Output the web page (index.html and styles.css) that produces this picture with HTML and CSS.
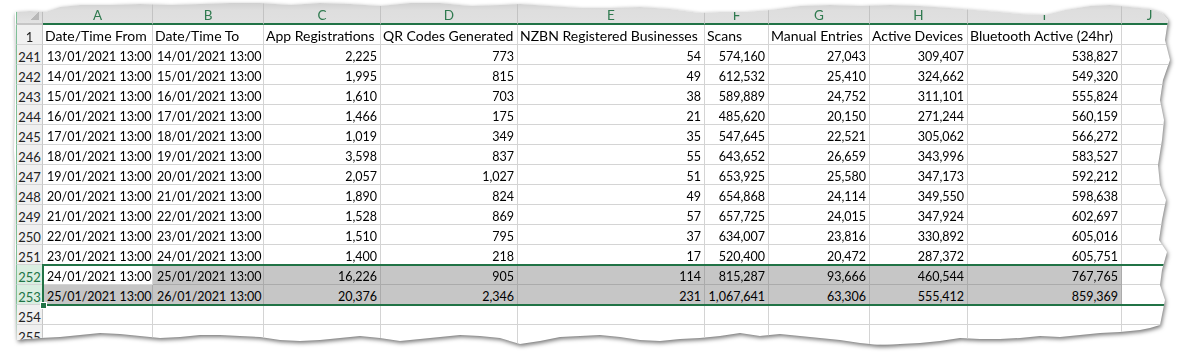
FILE: index.html
```html
<!DOCTYPE html>
<html>
<head>
<meta charset="utf-8">
<link rel="stylesheet" href="styles.css">
</head>
<body>
<div class="stage">
  <div class="sheet">
    <div class="grid">
      <div class="row head">
        <div class="corner"></div>
        <div class="ch">A</div><div class="ch">B</div><div class="ch">C</div><div class="ch">D</div><div class="ch">E</div><div class="ch">F</div><div class="ch">G</div><div class="ch">H</div><div class="ch">I</div><div class="ch">J</div>
      </div>
      <div class="row">
        <div class="rh">1</div>
        <div class="c t">Date/Time From</div><div class="c t">Date/Time To</div><div class="c t">App Registrations</div><div class="c t">QR Codes Generated</div><div class="c t">NZBN Registered Businesses</div><div class="c t">Scans</div><div class="c t">Manual Entries</div><div class="c t">Active Devices</div><div class="c t">Bluetooth Active (24hr)</div><div class="c"></div>
      </div>
      <div class="row">
        <div class="rh">241</div>
        <div class="c d">13/01/2021 13:00</div><div class="c d">14/01/2021 13:00</div><div class="c n">2,225</div><div class="c n">773</div><div class="c n">54</div><div class="c n">574,160</div><div class="c n">27,043</div><div class="c n">309,407</div><div class="c n">538,827</div><div class="c"></div>
      </div>
      <div class="row">
        <div class="rh">242</div>
        <div class="c d">14/01/2021 13:00</div><div class="c d">15/01/2021 13:00</div><div class="c n">1,995</div><div class="c n">815</div><div class="c n">49</div><div class="c n">612,532</div><div class="c n">25,410</div><div class="c n">324,662</div><div class="c n">549,320</div><div class="c"></div>
      </div>
      <div class="row">
        <div class="rh">243</div>
        <div class="c d">15/01/2021 13:00</div><div class="c d">16/01/2021 13:00</div><div class="c n">1,610</div><div class="c n">703</div><div class="c n">38</div><div class="c n">589,889</div><div class="c n">24,752</div><div class="c n">311,101</div><div class="c n">555,824</div><div class="c"></div>
      </div>
      <div class="row">
        <div class="rh">244</div>
        <div class="c d">16/01/2021 13:00</div><div class="c d">17/01/2021 13:00</div><div class="c n">1,466</div><div class="c n">175</div><div class="c n">21</div><div class="c n">485,620</div><div class="c n">20,150</div><div class="c n">271,244</div><div class="c n">560,159</div><div class="c"></div>
      </div>
      <div class="row">
        <div class="rh">245</div>
        <div class="c d">17/01/2021 13:00</div><div class="c d">18/01/2021 13:00</div><div class="c n">1,019</div><div class="c n">349</div><div class="c n">35</div><div class="c n">547,645</div><div class="c n">22,521</div><div class="c n">305,062</div><div class="c n">566,272</div><div class="c"></div>
      </div>
      <div class="row">
        <div class="rh">246</div>
        <div class="c d">18/01/2021 13:00</div><div class="c d">19/01/2021 13:00</div><div class="c n">3,598</div><div class="c n">837</div><div class="c n">55</div><div class="c n">643,652</div><div class="c n">26,659</div><div class="c n">343,996</div><div class="c n">583,527</div><div class="c"></div>
      </div>
      <div class="row">
        <div class="rh">247</div>
        <div class="c d">19/01/2021 13:00</div><div class="c d">20/01/2021 13:00</div><div class="c n">2,057</div><div class="c n">1,027</div><div class="c n">51</div><div class="c n">653,925</div><div class="c n">25,580</div><div class="c n">347,173</div><div class="c n">592,212</div><div class="c"></div>
      </div>
      <div class="row">
        <div class="rh">248</div>
        <div class="c d">20/01/2021 13:00</div><div class="c d">21/01/2021 13:00</div><div class="c n">1,890</div><div class="c n">824</div><div class="c n">49</div><div class="c n">654,868</div><div class="c n">24,114</div><div class="c n">349,550</div><div class="c n">598,638</div><div class="c"></div>
      </div>
      <div class="row">
        <div class="rh">249</div>
        <div class="c d">21/01/2021 13:00</div><div class="c d">22/01/2021 13:00</div><div class="c n">1,528</div><div class="c n">869</div><div class="c n">57</div><div class="c n">657,725</div><div class="c n">24,015</div><div class="c n">347,924</div><div class="c n">602,697</div><div class="c"></div>
      </div>
      <div class="row">
        <div class="rh">250</div>
        <div class="c d">22/01/2021 13:00</div><div class="c d">23/01/2021 13:00</div><div class="c n">1,510</div><div class="c n">795</div><div class="c n">37</div><div class="c n">634,007</div><div class="c n">23,816</div><div class="c n">330,892</div><div class="c n">605,016</div><div class="c"></div>
      </div>
      <div class="row">
        <div class="rh">251</div>
        <div class="c d">23/01/2021 13:00</div><div class="c d">24/01/2021 13:00</div><div class="c n">1,400</div><div class="c n">218</div><div class="c n">17</div><div class="c n">520,400</div><div class="c n">20,472</div><div class="c n">287,372</div><div class="c n">605,751</div><div class="c"></div>
      </div>
      <div class="row">
        <div class="rh srh">252</div>
        <div class="c d">24/01/2021 13:00</div><div class="c d sel">25/01/2021 13:00</div><div class="c n sel">16,226</div><div class="c n sel">905</div><div class="c n sel">114</div><div class="c n sel">815,287</div><div class="c n sel">93,666</div><div class="c n sel">460,544</div><div class="c n sel">767,765</div><div class="c"></div>
      </div>
      <div class="row">
        <div class="rh srh">253</div>
        <div class="c d sel">25/01/2021 13:00</div><div class="c d sel">26/01/2021 13:00</div><div class="c n sel">20,376</div><div class="c n sel">2,346</div><div class="c n sel">231</div><div class="c n sel">1,067,641</div><div class="c n sel">63,306</div><div class="c n sel">555,412</div><div class="c n sel">859,369</div><div class="c"></div>
      </div>
      <div class="row">
        <div class="rh">254</div>
        <div class="c"></div><div class="c"></div><div class="c"></div><div class="c"></div><div class="c"></div><div class="c"></div><div class="c"></div><div class="c"></div><div class="c"></div><div class="c"></div>
      </div>
      <div class="row">
        <div class="rh">255</div>
        <div class="c"></div><div class="c"></div><div class="c"></div><div class="c"></div><div class="c"></div><div class="c"></div><div class="c"></div><div class="c"></div><div class="c"></div><div class="c"></div>
      </div>
      <div class="selbox"><span class="handle"></span></div>
    </div>
  </div>
</div>
</body>
</html>
```
FILE: styles.css
```css
* { box-sizing: border-box; }
html, body { margin: 0; padding: 0; background: #ffffff; }
body { width: 1178px; height: 354px; overflow: hidden; }

.stage {
  width: 1178px;
  height: 354px;
  filter: drop-shadow(1px 2px 2px rgba(0, 0, 0, 0.55));
}

.sheet {
  width: 1178px;
  height: 354px;
  background: #ffffff;
  padding-left: 16px;
  font-family: Lato, "Liberation Sans", sans-serif;
  font-size: 12.5px;
  color: #000000;
  clip-path: polygon(
    15px 12px, 30px 11px, 45px 12px, 60px 7px, 80px 5px, 110px 5px, 140px 4px, 170px 5px, 200px 4px, 230px 3px,
    260px 3px, 290px 5px, 320px 3px, 350px 4px, 380px 6px, 410px 3px, 440px 3px, 470px 6px, 500px 5px, 520px 4px,
    550px 6px, 580px 8px, 610px 8px, 640px 7px, 670px 9px, 700px 13px, 720px 12px, 745px 12px, 770px 10px, 800px 6px,
    830px 5px, 860px 6px, 890px 5px, 920px 6px, 950px 8px, 975px 10px, 1000px 12px, 1020px 14px, 1045px 15px, 1065px 10px,
    1090px 6px, 1110px 5px, 1130px 7px, 1150px 9px, 1162px 13px,
    1168px 20px, 1165px 40px, 1170px 60px, 1163px 80px, 1160px 100px, 1164px 120px, 1162px 140px, 1158px 165px,
    1160px 185px, 1166px 200px, 1162px 220px, 1159px 240px, 1167px 252px, 1162px 270px, 1160px 285px, 1165px 300px,
    1162px 315px, 1160px 325px,
    1150px 328px, 1140px 330px, 1120px 332px, 1100px 333px, 1080px 335px, 1060px 337px, 1040px 336px, 1020px 338px,
    1000px 339px, 980px 339px, 960px 338px, 940px 341px, 920px 343px, 900px 344px, 880px 345px, 860px 343px,
    840px 340px, 820px 338px, 800px 336px, 780px 334px, 760px 336px, 740px 333px, 720px 336px, 700px 338px,
    680px 339px, 660px 341px, 640px 340px, 620px 337px, 600px 335px, 580px 336px, 560px 337px, 540px 341px,
    520px 344px, 500px 338px, 480px 336px, 460px 335px, 440px 337px, 420px 339px, 400px 341px, 380px 338px,
    360px 336px, 340px 338px, 320px 340px, 300px 341px, 280px 340px, 260px 337px, 240px 336px, 220px 335px,
    200px 335px, 180px 337px, 160px 338px, 140px 336px, 120px 334px, 100px 333px, 80px 335px, 60px 337px,
    40px 338px, 25px 339px, 17px 340px,
    16px 300px, 15px 250px, 16px 200px, 14px 150px, 15px 100px, 16px 50px, 15px 20px
  );
}

.grid {
  position: relative;
  width: 1162px;
}

.row {
  display: grid;
  grid-template-columns: 27px 110px 111px 117px 137px 187px 64px 101px 98px 154px 56px;
  height: 20px;
}

.row.head {
  height: 25px;
}

.corner {
  height: 25px;
  border-left: 1px solid #7fbf97;
  border-right: 1px solid #bdbdbd;
  border-bottom: 2px solid #c6c6c6;
  background:
    linear-gradient(135deg, transparent 62%, #b8b8b8 62%) right 3px bottom 3px / 11px 11px no-repeat,
    linear-gradient(#cfcfcf, #e3e3e3);
}

.ch {
  height: 25px;
  padding-top: 8px;
  line-height: 14px;
  font-size: 13.5px;
  text-align: center;
  color: #2f7a4f;
  background: linear-gradient(#cbcbcb, #dedede 45%, #e0e0e0);
  border-right: 1px solid #c3c3c3;
  border-bottom: 2px solid #217346;
}

.rh {
  height: 20px;
  padding-top: 5px;
  line-height: 14px;
  font-size: 13px;
  text-align: center;
  color: #222222;
  background: #f0f0f0;
  border-left: 1px solid #7fbf97;
  border-right: 1px solid #c6c6c6;
  border-bottom: 1px solid #d4d4d4;
}

.rh.srh {
  color: #217346;
  background: #d9eee1;
}

.c {
  height: 20px;
  padding: 5px 3px 0 3px;
  line-height: 14px;
  white-space: nowrap;
  overflow: hidden;
  border-right: 1px solid #d4d4d4;
  border-bottom: 1px solid #d4d4d4;
}

.c.d {
  padding-left: 4px;
}

.c.t {
  font-size: 14px;
  padding-top: 4px;
  padding-left: 2px;
}

.c.n { text-align: right; }

.c.sel {
  background: #c6c6c6;
  border-color: #ababab;
}

.selbox {
  position: absolute;
  left: 26px;
  top: 264px;
  width: 1136px;
  height: 42px;
  border-top: 2px solid #217346;
  border-bottom: 2px solid #217346;
  border-left: 2px solid #217346;
  pointer-events: none;
}

.handle {
  position: absolute;
  left: -4px;
  bottom: -5px;
  width: 7px;
  height: 7px;
  background: #217346;
  border: 1px solid #ffffff;
}
```
